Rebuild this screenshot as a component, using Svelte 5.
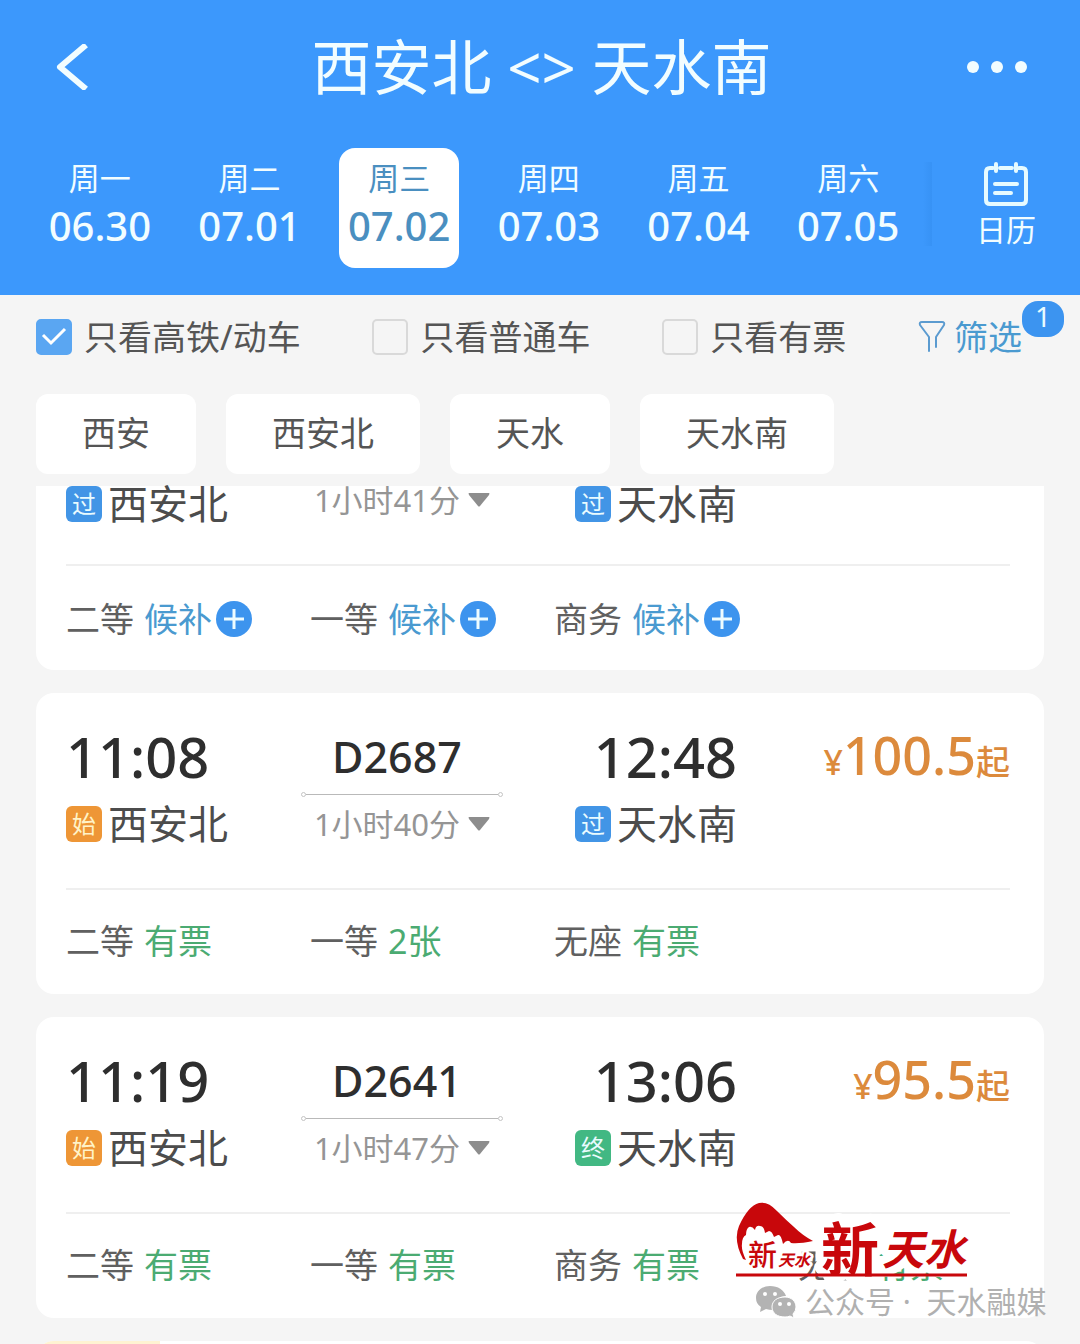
<script>
    const days = [
        { week: '周一', date: '06.30' },
        { week: '周二', date: '07.01' },
        { week: '周三', date: '07.02' },
        { week: '周四', date: '07.03' },
        { week: '周五', date: '07.04' },
        { week: '周六', date: '07.05' }
    ];
    let selectedDate = '07.02';

    let filters = [
        { id: 'highspeed', label: '只看高铁/动车', checked: true },
        { id: 'normal', label: '只看普通车', checked: false },
        { id: 'available', label: '只看有票', checked: false }
    ];

    const stations = ['西安', '西安北', '天水', '天水南'];

    // The first train is scrolled halfway under the filter bar
    const trains = [
        {
            scrolled: true,
            duration: '1小时41分',
            from: { tag: '过', name: '西安北' },
            to: { tag: '过', name: '天水南' },
            seats: [
                { type: '二等', left: '候补' },
                { type: '一等', left: '候补' },
                { type: '商务', left: '候补' }
            ]
        },
        {
            number: 'D2687',
            duration: '1小时40分',
            price: '100.5',
            from: { tag: '始', name: '西安北', time: '11:08' },
            to: { tag: '过', name: '天水南', time: '12:48' },
            seats: [
                { type: '二等', left: '有票' },
                { type: '一等', left: '2张' },
                { type: '无座', left: '有票' }
            ]
        },
        {
            number: 'D2641',
            duration: '1小时47分',
            price: '95.5',
            from: { tag: '始', name: '西安北', time: '11:19' },
            to: { tag: '终', name: '天水南', time: '13:06' },
            seats: [
                { type: '二等', left: '有票' },
                { type: '一等', left: '有票' },
                { type: '商务', left: '有票' },
                { type: '无座', left: '有票' }
            ]
        }
    ];

    const tagClass = { 过: 'tag--pass', 始: 'tag--start', 终: 'tag--end' };
</script>

<div class="page">
    <header class="header">
        <div class="titlebar">
            <button class="icon-btn" aria-label="返回">
                <svg width="34" height="46" viewBox="0 0 34 46"><path d="M31 1 L5 23 L31 45" fill="none" stroke="#f2fdff" stroke-width="6" stroke-linejoin="round" /></svg>
            </button>
            <h1>西安北 &lt;&gt; 天水南</h1>
            <button class="icon-btn icon-btn--right" aria-label="更多">
                <svg width="62" height="14" viewBox="0 0 62 14" fill="#f2fdff"><circle cx="7" cy="7" r="6" /><circle cx="31" cy="7" r="6" /><circle cx="55" cy="7" r="6" /></svg>
            </button>
        </div>

        <nav class="dates">
            <div class="dates__list">
                {#each days as day}
                    <button
                        class="day"
                        class:day--active={day.date === selectedDate}
                        on:click={() => (selectedDate = day.date)}
                    >
                        <span class="day__week">{day.week}</span>
                        <span class="day__date">{day.date}</span>
                    </button>
                {/each}
            </div>
            <span class="dates__shade"></span>
            <button class="calendar">
                <svg width="44" height="44" viewBox="0 0 44 44" fill="none" stroke="#e6fbff" stroke-width="4" stroke-linecap="round">
                    <path d="M9 6H6Q2 6 2 10V38Q2 42 6 42H38Q42 42 42 38V10Q42 6 38 6H35M16 6H28M12 2V9M32 2V9M11 22H33M11 31H27" />
                </svg>
                <span>日历</span>
            </button>
        </nav>
    </header>

    <div class="filters">
        {#each filters as filter}
            <label class="check" for={filter.id}>
                <input type="checkbox" id={filter.id} bind:checked={filter.checked} />
                <span>{filter.label}</span>
            </label>
        {/each}
        <button class="filter-btn">
            <svg width="28" height="34" viewBox="0 0 28 34" fill="none" stroke="#5b9bd0" stroke-width="2" stroke-linejoin="round" stroke-linecap="round">
                <path d="M11 31V17L2 5Q1 2 4 2H24Q27 2 26 5L18 17V27" />
            </svg>
            <span>筛选</span>
            <span class="filter-btn__count">1</span>
        </button>
    </div>

    <div class="stations">
        {#each stations as station}
            <button class="station-btn">{station}</button>
        {/each}
    </div>

    <main class="list">
        {#each trains as train}
            <article class="card" class:card--scrolled={train.scrolled}>
                <div class="trip">
                    <div class="stop">
                        {#if train.from.time}
                            <div class="time">{train.from.time}</div>
                        {/if}
                        <div class="stop__name">
                            <span class="tag {tagClass[train.from.tag]}">{train.from.tag}</span>{train.from.name}
                        </div>
                    </div>
                    <div class="route">
                        {#if train.number}
                            <div class="route__number">{train.number}</div>
                            <div class="route__line"></div>
                        {/if}
                        <button class="route__duration">
                            {train.duration}
                            <svg width="22" height="14" viewBox="0 0 22 14"><path d="M1 0H21Q22 0 21 2L12 13Q11 14 10 13L1 2Q0 0 1 0Z" fill="#8d8d8d" /></svg>
                        </button>
                    </div>
                    <div class="stop stop--to">
                        {#if train.to.time}
                            <div class="time">{train.to.time}</div>
                        {/if}
                        <div class="stop__name">
                            <span class="tag {tagClass[train.to.tag]}">{train.to.tag}</span>{train.to.name}
                        </div>
                    </div>
                    {#if train.price}
                        <div class="price"><small>¥</small>{train.price}<span>起</span></div>
                    {/if}
                </div>
                <div class="seats">
                    {#each train.seats as seat}
                        <div class="seat">
                            <span>{seat.type}</span>
                            {#if seat.left === '候补'}
                                <button class="seat__wait">
                                    候补
                                    <svg width="36" height="36" viewBox="0 0 36 36"><circle cx="18" cy="18" r="18" fill="#3d94ee" /><path d="M8 18H28M18 8V28" stroke="#eefcff" stroke-width="3" /></svg>
                                </button>
                            {:else}
                                <span class="seat__left">{seat.left}</span>
                            {/if}
                        </div>
                    {/each}
                </div>
            </article>
        {/each}

        <!-- Top edge of the next card -->
        <article class="card card--next"><div class="card__ribbon"></div></article>

        <div class="brand">
            <svg class="brand__logo" width="234" height="78" viewBox="0 0 234 78">
                <path d="M7 57Q-3 38 3 24Q12 4 23 1Q32 -1 41 9Q50 18 58 25Q66 33 77 39Q63 42 55 41Q52 36 47 42Q45 32 42 33L38 35Q36 29 33 29L29 31Q28 24 24 24Q20 23 19 28Q16 24 13 25Q10 27 10 33Q6 35 6 42Q5 48 10 58Z" fill="#c8070b" />
                <g class="brand__text">
                    <text x="12" y="64" font-size="29" font-weight="500">新</text>
                    <text class="brush" x="42" y="64" font-size="16" font-weight="700">天水</text>
                    <text class="brand__name" x="85" y="69" font-size="58" font-weight="700">新</text>
                    <text class="brand__name brush" x="146" y="63" font-size="42" font-weight="700">天水</text>
                </g>
                <path d="M0 73H231" stroke="#c8070b" stroke-width="3" />
            </svg>
            <div class="brand__account">
                <svg width="42" height="34" viewBox="0 0 42 34" fill="#b3b3b3">
                    <path d="M15 1C7 1 1 6 1 13Q1 19 6 22L5 27L11 24Q14 25 18 25C19 15 25 11 31 11C29 5 23 1 15 1Z" />
                    <path d="M30 12C22 12 17 16 17 22C17 28 22 32 30 32Q33 32 35 31L39 33L38 29Q41 26 41 22C41 16 36 12 30 12Z" stroke="#fff" />
                    <g fill="#fff"><circle cx="10" cy="9" r="2" /><circle cx="20" cy="9" r="2" /><circle cx="25" cy="19" r="2" /><circle cx="34" cy="19" r="2" /></g>
                </svg>
                <span>公众号&nbsp;·&nbsp; 天水融媒</span>
            </div>
        </div>
    </main>
</div>

<style>
    :global(body) {
        margin: 0;
        background: #f5f5f5;
    }

    .page {
        height: 100vh;
        overflow: hidden;
        display: flex;
        flex-direction: column;
        background: #f5f5f5;
        color: #555;
        font-family: "Noto Sans", "Noto Sans CJK SC", sans-serif;
    }

    button {
        padding: 0;
        border: none;
        background: none;
        color: inherit;
        font: inherit;
        cursor: pointer;
    }

    svg {
        display: block;
        flex: none;
    }

    .header {
        flex: none;
        padding-bottom: 27px;
        background: #3c98fc;
        color: #f2fdff;
    }

    .titlebar {
        display: grid;
        grid-template-columns: 1fr auto 1fr;
        align-items: center;
        height: 134px;
        padding: 0 52px 0 55px;
    }

    h1 {
        margin: 0;
        font-size: 60px;
        line-height: 80px;
        font-weight: 400;
        white-space: nowrap;
    }

    .icon-btn {
        justify-self: start;
    }

    .icon-btn--right {
        justify-self: end;
    }

    .dates {
        display: flex;
        margin-top: 14px;
        padding-left: 25px;
    }

    .dates__list {
        flex: 1;
        display: grid;
        grid-template-columns: repeat(6, 1fr);
        justify-items: center;
    }

    .day {
        display: flex;
        flex-direction: column;
        align-items: center;
        box-sizing: border-box;
        width: 120px;
        height: 120px;
        padding-top: 6px;
        border-radius: 16px;
    }

    .day--active {
        background: #fff;
        color: #4a8fc0;
    }

    .day__week {
        font-size: 31px;
        line-height: 48px;
    }

    .day__date {
        font-size: 40px;
        line-height: 48px;
        font-weight: 500;
    }

    .dates__shade {
        width: 9px;
        height: 84px;
        margin-top: 14px;
        background: linear-gradient(to right, #3c98fc, #3792f5);
    }

    .calendar {
        display: flex;
        flex-direction: column;
        align-items: center;
        width: 148px;
        padding-top: 14px;
        font-size: 30px;
        line-height: 48px;
    }

    .filters {
        flex: none;
        display: flex;
        align-items: center;
        justify-content: space-between;
        height: 84px;
        padding: 0 58px 0 36px;
        font-size: 34px;
        line-height: 48px;
    }

    .check {
        display: flex;
        align-items: center;
        gap: 12px;
    }

    .check input {
        appearance: none;
        width: 36px;
        height: 36px;
        margin: 0;
        border: 2px solid #d9d9d9;
        border-radius: 5px;
    }

    .check input:checked {
        border-color: #5aa6f2;
        background: #5aa6f2 url("data:image/svg+xml,%3Csvg xmlns='http://www.w3.org/2000/svg' viewBox='0 0 32 32'%3E%3Cpath d='M5 14L13 22L27 8' fill='none' stroke='white' stroke-width='3'/%3E%3C/svg%3E");
    }

    .filter-btn {
        position: relative;
        display: flex;
        align-items: center;
        gap: 8px;
        color: #4a9ad0;
    }

    .filter-btn__count {
        position: absolute;
        left: 100%;
        top: -12px;
        width: 42px;
        height: 36px;
        border-radius: 16px;
        background: #3c94f0;
        color: #e9fbff;
        font-size: 28px;
        line-height: 30px;
    }

    .stations {
        flex: none;
        display: flex;
        gap: 30px;
        padding: 15px 36px 12px;
    }

    .station-btn {
        height: 80px;
        padding: 0 46px 6px;
        border-radius: 12px;
        background: #fff;
        font-size: 34px;
    }

    .list {
        position: relative;
        flex: none;
        display: flex;
        flex-direction: column;
        gap: 23px;
        padding: 0 36px;
    }

    .card {
        padding: 36px 34px 33px 30px;
        border-radius: 18px;
        background: #fff;
    }

    .card--scrolled {
        padding-top: 0;
        border-radius: 0 0 18px 18px;
    }

    .card--next {
        padding: 0;
        overflow: hidden;
    }

    .card__ribbon {
        width: 124px;
        height: 36px;
        background: #fff3d2;
    }

    .trip {
        display: grid;
        grid-template-columns: 163px 202px 162px 1fr;
        column-gap: 72px;
        padding-bottom: 46px;
        border-bottom: 2px solid #efefef;
    }

    .card--scrolled .trip {
        padding-bottom: 42px;
    }

    .stop--to {
        text-align: right;
    }

    .time {
        height: 56px;
        margin-bottom: 21px;
        color: #2e2e2e;
        font-size: 56px;
        line-height: 54px;
        font-weight: 500;
    }

    .stop__name {
        display: flex;
        align-items: center;
        gap: 6px;
        height: 36px;
        color: #4c4c4c;
        font-size: 40px;
        line-height: 36px;
        white-space: nowrap;
    }

    .tag {
        width: 36px;
        height: 36px;
        border-radius: 6px;
        color: #e9fbff;
        font-size: 24px;
        text-align: center;
    }

    .tag--pass {
        background: #4295e6;
    }

    .tag--start {
        background: #ee9636;
        color: #fff3c8;
    }

    .tag--end {
        background: #42b883;
    }

    .route__number {
        padding-right: 10px;
        color: #2e2e2e;
        font-size: 43px;
        line-height: 56px;
        font-weight: 500;
        text-align: center;
    }

    .route__line {
        position: relative;
        height: 1px;
        margin: 9px 5px 11px;
        background: #b9b9b9;
    }

    .route__line::before,
    .route__line::after {
        content: '';
        position: absolute;
        top: -2px;
        width: 3px;
        height: 3px;
        border: 1px solid #c4c4c4;
        border-radius: 50%;
    }

    .route__line::before {
        right: 100%;
    }

    .route__line::after {
        left: 100%;
    }

    .route__duration {
        display: flex;
        align-items: center;
        justify-content: center;
        gap: 8px;
        width: 100%;
        color: #959595;
        font-size: 31px;
        line-height: 36px;
        white-space: nowrap;
    }

    .card--scrolled .route__duration {
        line-height: 28px;
    }

    .price {
        justify-self: end;
        height: 56px;
        color: #dc8a3c;
        font-size: 52px;
        line-height: 52px;
        font-weight: 500;
        white-space: nowrap;
    }

    .price small,
    .price span {
        font-size: 34px;
    }

    .seats {
        display: grid;
        grid-template-columns: repeat(4, 244px);
        margin-top: 31px;
        color: #606060;
        font-size: 34px;
        line-height: 40px;
    }

    .card--scrolled .seats {
        margin: 33px 0 -2px;
    }

    .seat {
        display: flex;
        gap: 10px;
        white-space: nowrap;
    }

    .seat__left {
        color: #4bab72;
    }

    .seat__wait {
        display: flex;
        align-items: center;
        gap: 4px;
        color: #4a9ad0;
    }

    /* Publisher mark over the list */
    .brand {
        position: absolute;
        top: 716px;
        right: 32px;
        width: 312px;
    }

    .brand__logo {
        overflow: visible;
        font-family: "Noto Sans CJK SC", sans-serif;
    }

    .brand__text {
        fill: #c8070b;
        stroke: #fff;
        stroke-width: 5px;
        stroke-linejoin: round;
        paint-order: stroke;
    }

    .brand__name {
        stroke-width: 16px;
    }

    .brush {
        font-style: italic;
    }

    .brand__account {
        display: flex;
        align-items: center;
        gap: 8px;
        margin: 2px 0 0 19px;
        color: #b0b0b0;
        font-size: 30px;
        line-height: 40px;
        white-space: nowrap;
    }
</style>
